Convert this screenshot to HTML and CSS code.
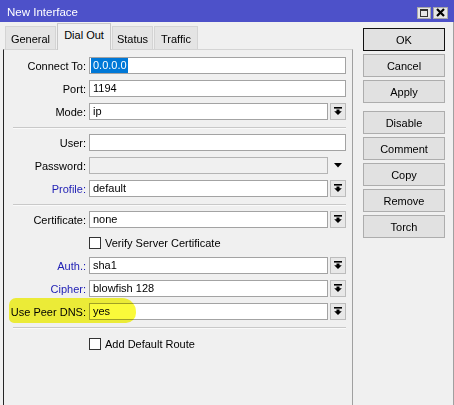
FILE: index.html
```html
<!DOCTYPE html>
<html>
<head>
<meta charset="utf-8">
<title>New Interface</title>
<link rel="stylesheet" href="styles.css">
</head>
<body>
<div class="titlebar">
  <span class="title">New Interface</span>
  <div class="tb-buttons">
    <span class="tb-btn max"><svg width="8" height="8" viewBox="0 0 8 8"><rect x="0.5" y="0.5" width="7" height="7" fill="none" stroke="#333" stroke-width="1"/><rect x="0" y="0" width="8" height="2" fill="#333"/></svg></span>
    <span class="tb-btn close"><svg width="9" height="9" viewBox="0 0 9 9"><path d="M1 1 L8 8 M8 1 L1 8" stroke="#000" stroke-width="2.2"/></svg></span>
  </div>
</div>
<div class="main">
  <div class="left">
    <div class="tabs">
      <div class="tab t-general">General</div>
      <div class="tab t-dial active">Dial Out</div>
      <div class="tab t-status">Status</div>
      <div class="tab t-traffic">Traffic</div>
    </div>
    <div class="panel">
      <div class="row"><span class="lbl">Connect To:</span><div class="input sel-input"><span class="sel">0.0.0.0</span></div></div>
      <div class="row"><span class="lbl">Port:</span><div class="input">1194</div></div>
      <div class="row"><span class="lbl">Mode:</span><div class="input">ip</div><span class="dd"><svg width="8" height="8" viewBox="0 0 8 8"><rect x="0" y="0" width="8" height="1.6" fill="#000"/><path d="M2.5 2.6 H5.5 V4.2 H7.8 L4 8 L0.2 4.2 H2.5 Z" fill="#000"/></svg></span></div>
      <div class="sep"></div>
      <div class="row"><span class="lbl">User:</span><div class="input"></div></div>
      <div class="row"><span class="lbl">Password:</span><div class="input disabled"></div><span class="dd-plain"><svg width="8" height="5" viewBox="0 0 8 5"><path d="M0 0 H8 L4 4.5 Z" fill="#000"/></svg></span></div>
      <div class="row"><span class="lbl blue">Profile:</span><div class="input">default</div><span class="dd"><svg width="8" height="8" viewBox="0 0 8 8"><rect x="0" y="0" width="8" height="1.6" fill="#000"/><path d="M2.5 2.6 H5.5 V4.2 H7.8 L4 8 L0.2 4.2 H2.5 Z" fill="#000"/></svg></span></div>
      <div class="sep"></div>
      <div class="row"><span class="lbl">Certificate:</span><div class="input">none</div><span class="dd"><svg width="8" height="8" viewBox="0 0 8 8"><rect x="0" y="0" width="8" height="1.6" fill="#000"/><path d="M2.5 2.6 H5.5 V4.2 H7.8 L4 8 L0.2 4.2 H2.5 Z" fill="#000"/></svg></span></div>
      <div class="row check-row"><span class="checkbox"></span><span class="check-lbl">Verify Server Certificate</span></div>
      <div class="row"><span class="lbl blue">Auth.:</span><div class="input">sha1</div><span class="dd"><svg width="8" height="8" viewBox="0 0 8 8"><rect x="0" y="0" width="8" height="1.6" fill="#000"/><path d="M2.5 2.6 H5.5 V4.2 H7.8 L4 8 L0.2 4.2 H2.5 Z" fill="#000"/></svg></span></div>
      <div class="row"><span class="lbl blue">Cipher:</span><div class="input">blowfish 128</div><span class="dd"><svg width="8" height="8" viewBox="0 0 8 8"><rect x="0" y="0" width="8" height="1.6" fill="#000"/><path d="M2.5 2.6 H5.5 V4.2 H7.8 L4 8 L0.2 4.2 H2.5 Z" fill="#000"/></svg></span></div>
      <div class="row"><span class="lbl">Use Peer DNS:</span><div class="input">yes</div><span class="dd"><svg width="8" height="8" viewBox="0 0 8 8"><rect x="0" y="0" width="8" height="1.6" fill="#000"/><path d="M2.5 2.6 H5.5 V4.2 H7.8 L4 8 L0.2 4.2 H2.5 Z" fill="#000"/></svg></span></div>
      <div class="sep"></div>
      <div class="row check-row last-check"><span class="checkbox"></span><span class="check-lbl">Add Default Route</span></div>
    </div>
  </div>
  <div class="buttons">
    <div class="btn default">OK</div>
    <div class="btn">Cancel</div>
    <div class="btn">Apply</div>
    <div class="btn group-start">Disable</div>
    <div class="btn">Comment</div>
    <div class="btn">Copy</div>
    <div class="btn">Remove</div>
    <div class="btn">Torch</div>
  </div>
</div>
<div class="highlight"></div>
</body>
</html>
```

FILE: styles.css
```css
* { box-sizing: border-box; }
html, body { margin: 0; padding: 0; }
body {
  width: 454px;
  height: 405px;
  overflow: hidden;
  position: relative;
  background: #f0f0f0;
  font-family: "Liberation Sans", Arial, sans-serif;
  font-size: 11px;
  color: #000;
}
.titlebar {
  height: 22px;
  background: #4d51c9;
  color: #fff;
  display: flex;
  align-items: center;
  justify-content: space-between;
  padding: 0 6px 0 7px;
  font-size: 11.5px;
}
.title { padding-top: 1px; }
.tb-buttons { display: flex; gap: 2px; margin-top: 3px; }
.tb-btn {
  width: 14px;
  height: 12px;
  background: #e6e6e6;
  border: 1px solid #a8a8a8;
  display: flex;
  align-items: center;
  justify-content: center;
}
.tb-btn.close { width: 15px; }
.main {
  display: flex;
  height: 383px;
  border-right: 1px solid #a0a0a0;
}
.left {
  width: 353px;
  padding-left: 3px;
  display: flex;
  flex-direction: column;
}
.tabs {
  height: 27px;
  display: flex;
  align-items: flex-end;
  padding-left: 2px;
  gap: 1px;
}
.tab {
  height: 23px;
  display: flex;
  align-items: center;
  justify-content: center;
  background: #e4e4e4;
  border: 1px solid #d4d4d4;
  border-bottom: none;
  padding-top: 1px;
}
.t-general { width: 51px; }
.t-dial { width: 54px; }
.t-status { width: 41px; }
.t-traffic { width: 44px; }
.tab.active {
  height: 27px;
  margin-bottom: -1px;
  background: #f0f0f0;
  border-color: #c8c8c8;
  padding-top: 0;
  padding-bottom: 4px;
  position: relative;
  z-index: 1;
}
.panel {
  flex: 1;
  border-left: 1px solid #262626;
  border-top: 1px solid #d4d4d4;
  border-right: 1px solid #a0a0a0;
  padding: 7px 6px 0 0;
  display: flex;
  flex-direction: column;
  gap: 6px;
}
.row {
  height: 17px;
  display: flex;
  align-items: center;
}
.lbl {
  width: 82px;
  margin-right: 3px;
  text-align: right;
  white-space: nowrap;
}
.lbl.blue { color: #1d1db4; }
.input {
  flex: 1;
  height: 17px;
  background: #fff;
  border: 1px solid #a3a3a3;
  padding-left: 3px;
  line-height: 15px;
  white-space: nowrap;
  overflow: hidden;
}
.input.disabled { background: #f0f0f0; border-color: #b4b4b4; }
.sel-input { padding-left: 1px; }
.sel {
  display: inline-block;
  height: 15px;
  line-height: 15px;
  background: #0078d7;
  color: #fff;
  padding: 0 1px 0 2px;
}
.dd {
  width: 16px;
  height: 17px;
  margin-left: 2px;
  border: 1px solid #bcbcbc;
  background: #e8e8e8;
  display: flex;
  justify-content: center;
  padding-top: 3px;
}
.dd-plain {
  width: 16px;
  height: 17px;
  margin-left: 2px;
  display: flex;
  justify-content: center;
  align-items: center;
}
.sep {
  height: 1px;
  margin: 1px 0 0 9px;
  background: #c9c9c9;
  box-shadow: 0 1px 0 #fafafa;
}
.check-row { padding-left: 85px; }
.last-check { margin-top: 1px; }
.checkbox {
  width: 12px;
  height: 12px;
  background: #fff;
  border: 1px solid #333;
  margin-right: 4px;
}
.buttons {
  width: 82px;
  margin-left: 10px;
  padding-top: 6px;
  display: flex;
  flex-direction: column;
  gap: 3px;
}
.btn {
  height: 23px;
  background: #e1e1e1;
  border: 1px solid #adadad;
  display: flex;
  align-items: center;
  justify-content: center;
}
.btn.default { border-color: #111; }
.btn.group-start { margin-top: 5px; }
.highlight {
  position: absolute;
  left: 9px;
  top: 298px;
  width: 127px;
  height: 25px;
  background: #fafa3a;
  border-radius: 7px 14px 10px 5px;
  mix-blend-mode: multiply;
  pointer-events: none;
}
```
